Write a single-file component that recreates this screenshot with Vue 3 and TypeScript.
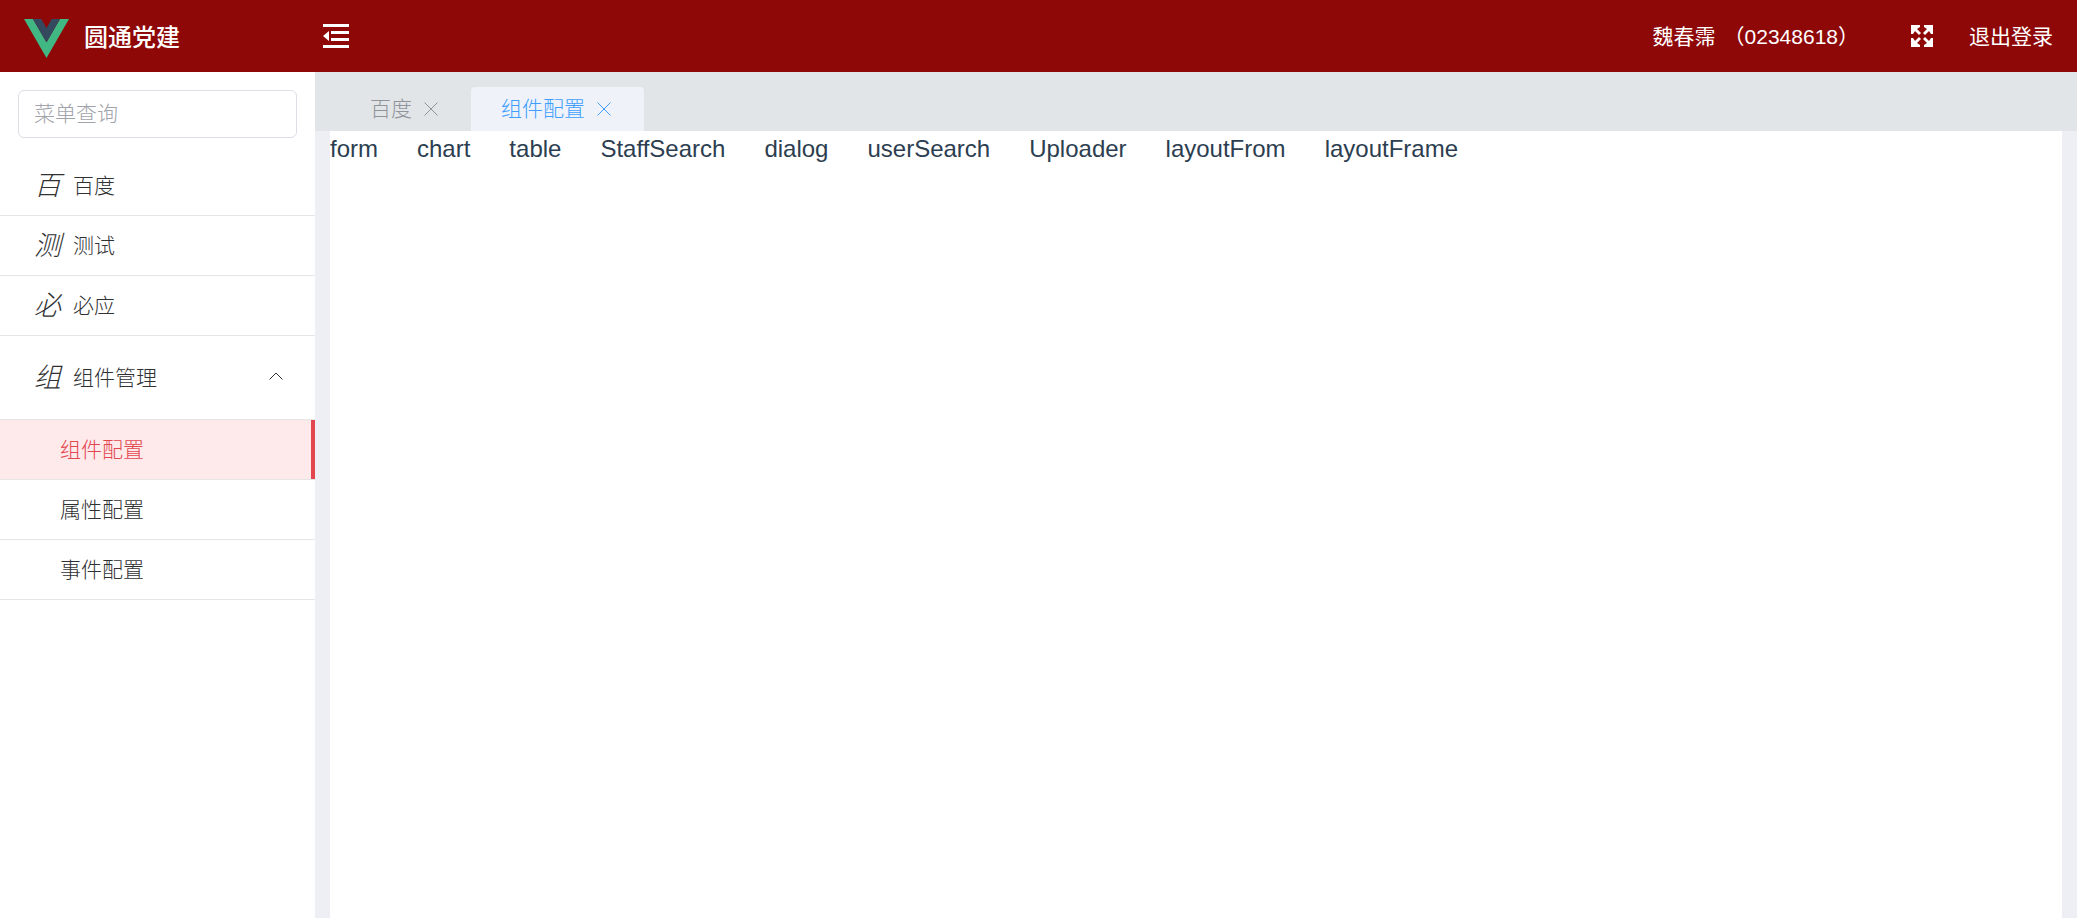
<script setup lang="ts">
import { computed, ref } from 'vue'

interface MenuItem {
  title: string
}

const keyword = ref('')
const expanded = ref(true)
const activeMenu = ref('组件配置')
const activeTab = ref('组件配置')
const collapsed = ref(false)

const menus: MenuItem[] = [{ title: '百度' }, { title: '测试' }, { title: '必应' }]
const subMenus: MenuItem[] = [{ title: '组件配置' }, { title: '属性配置' }, { title: '事件配置' }]
const tabs = ref<string[]>(['百度', '组件配置'])
const links: string[] = [
  'form',
  'chart',
  'table',
  'StaffSearch',
  'dialog',
  'userSearch',
  'Uploader',
  'layoutFrom',
  'layoutFrame',
]

const visibleMenus = computed(() => menus.filter((m) => m.title.includes(keyword.value)))

function closeTab(name: string): void {
  tabs.value = tabs.value.filter((t) => t !== name)
}
</script>

<template>
  <div class="app">
    <header class="header">
      <div class="brand">
        <svg class="logo" viewBox="0 0 256 221" aria-hidden="true">
          <path fill="#41b883" d="M0 0l128 220.8L256 0h-51.2L128 132.48 50.56 0z" />
          <path fill="#35495e" d="M50.56 0L128 133.12 204.8 0h-47.36L128 51.2 97.92 0z" />
        </svg>
        <h1 class="title">圆通党建</h1>
      </div>
      <button class="icon-btn" type="button" aria-label="折叠菜单" @click="collapsed = !collapsed">
        <svg class="fold" viewBox="0 0 26 26" fill="#fff">
          <path d="M0 1h26v3H0zM8 8h18v3H8zM8 15h18v3H8zM0 22h26v3H0zM0 13l6-5v10z" />
        </svg>
      </button>
      <span class="user"><span>魏春霈</span><span>（02348618）</span></span>
      <button class="icon-btn full-btn" type="button" aria-label="全屏">
        <svg class="full" viewBox="0 0 22 22" fill="#fff">
          <path d="M0 0h9v2L6 4l4 4-2 2-4-4-2 3H0z" />
          <path d="M22 0v9h-2l-2-3-4 4-2-2 4-4-3-2V0z" />
          <path d="M0 22v-9h2l2 3 4-4 2 2-4 4 3 2v2z" />
          <path d="M22 22h-9v-2l3-2-4-4 2-2 4 4 2-3h2z" />
        </svg>
      </button>
      <button class="logout" type="button">退出登录</button>
    </header>

    <div class="body">
      <aside v-show="!collapsed" class="sidebar">
        <div class="search">
          <input v-model="keyword" type="text" placeholder="菜单查询" aria-label="菜单查询" />
        </div>
        <nav>
          <a
            v-for="m in visibleMenus"
            :key="m.title"
            class="item"
            href="#"
            @click.prevent="activeMenu = m.title"
          >
            <i class="initial">{{ m.title[0] }}</i>
            <span>{{ m.title }}</span>
          </a>
          <button class="group" type="button" :aria-expanded="expanded" @click="expanded = !expanded">
            <i class="initial">组</i>
            <span>组件管理</span>
            <svg class="arrow" viewBox="0 0 14 8" fill="none" stroke="#303133">
              <path d="M.5 7.5L7 1l6.5 6.5" />
            </svg>
          </button>
          <div v-show="expanded">
            <a
              v-for="s in subMenus"
              :key="s.title"
              class="item sub"
              :class="{ active: s.title === activeMenu }"
              href="#"
              @click.prevent="activeMenu = s.title"
              >{{ s.title }}</a
            >
          </div>
        </nav>
      </aside>

      <main class="main">
        <div class="tabs">
          <div v-for="t in tabs" :key="t" class="tab" :class="{ current: t === activeTab }">
            <button class="tab-label" type="button" @click="activeTab = t">{{ t }}</button>
            <button class="tab-close" type="button" :aria-label="'关闭' + t" @click="closeTab(t)">
              <svg viewBox="0 0 14 14" fill="none" stroke="currentColor">
                <path d="M.5.5l13 13M13.5.5l-13 13" />
              </svg>
            </button>
          </div>
        </div>
        <section class="content">
          <a v-for="l in links" :key="l" href="#" @click.prevent>{{ l }}</a>
        </section>
      </main>
    </div>
  </div>
</template>

<style>
body {
  margin: 0;
}
</style>

<style scoped>
.app {
  display: flex;
  flex-direction: column;
  min-height: 100vh;
  font-family: 'Liberation Sans', 'Noto Sans CJK SC', sans-serif;
  font-size: 21px;
  font-weight: 300;
  color: #303133;
}

.app * {
  box-sizing: border-box;
}

button {
  padding: 0;
  border: 0;
  background: none;
  font: inherit;
  color: inherit;
  cursor: pointer;
}

a {
  color: inherit;
  text-decoration: none;
}

svg {
  display: block;
}

.header {
  display: flex;
  align-items: center;
  height: 72px;
  padding: 0 24px 2px 0;
  background: #8f0808;
  color: #fff;
  font-weight: 400;
}

.brand {
  display: flex;
  align-items: center;
  gap: 15px;
  width: 300px;
  padding-left: 24px;
}

.logo {
  width: 45px;
  height: 39px;
  margin-top: 6px;
}

.title {
  margin: 0;
  font-size: 24px;
  font-weight: 500;
}

.icon-btn {
  padding: 2px 0 0 23px;
}

.fold {
  width: 26px;
  height: 26px;
}

.user {
  display: flex;
  gap: 8px;
  margin-left: auto;
}

.full-btn {
  padding: 2px 36px 0 52px;
}

.full {
  width: 22px;
  height: 22px;
}

.body {
  display: flex;
  flex: 1;
}

.sidebar {
  flex: none;
  width: 315px;
  background: #fff;
}

.search {
  padding: 18px;
}

.search input {
  display: block;
  width: 100%;
  height: 48px;
  padding: 0 15px;
  border: 1px solid #dcdfe6;
  border-radius: 6px;
  outline: 0;
  font: inherit;
  color: #606266;
}

.search input::placeholder {
  color: #a0a3a9;
  opacity: 1;
}

.item,
.group {
  display: flex;
  align-items: center;
  width: 100%;
  height: 60px;
  padding: 0 32px 4px 34px;
  border-bottom: 1px solid #e6e6e6;
}

.group {
  height: 84px;
}

.initial {
  width: 39px;
  font-size: 27px;
  text-align: left;
}

.arrow {
  width: 14px;
  height: 8px;
  margin-left: auto;
}

.sub {
  padding-left: 60px;
}

.sub.active {
  background: #ffeaeb;
  color: #e2464f;
  box-shadow: inset -4px 0 #e2464f;
}

.main {
  display: flex;
  flex: 1;
  flex-direction: column;
  min-width: 0;
  background: #eeeff5;
}

.tabs {
  display: flex;
  align-items: flex-end;
  height: 59px;
  padding-left: 25px;
  background: #e1e5e8;
}

.tab {
  display: flex;
  align-items: center;
  gap: 9px;
  height: 44px;
  padding: 0 30px;
  border-radius: 4px 4px 0 0;
  color: #909399;
}

.tab.current {
  background: #eff3f9;
  color: #409eff;
}

.tab-label {
  padding-bottom: 5px;
}

.tab-close {
  display: grid;
  place-items: center;
  width: 20px;
  height: 20px;
}

.tab-close svg {
  width: 14px;
  height: 14px;
}

.content {
  display: flex;
  flex: 1;
  flex-wrap: wrap;
  align-content: flex-start;
  gap: 0 39px;
  margin: 0 15px;
  padding-top: 4px;
  background: #fff;
  color: #2c3e50;
  font-size: 24px;
  font-weight: 400;
  line-height: 28px;
}
</style>
